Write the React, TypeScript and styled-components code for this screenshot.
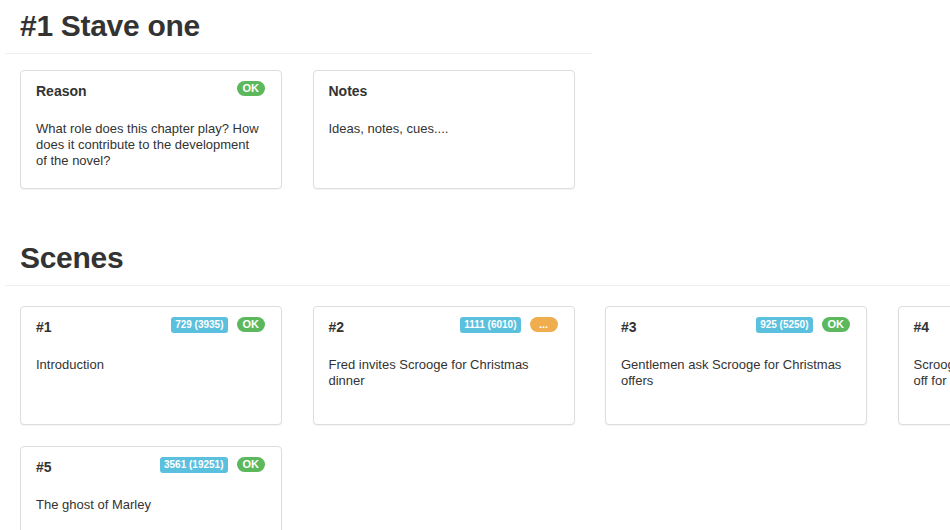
import React, { FC } from "react";
import styled, { createGlobalStyle } from "styled-components";

type Status = "ok" | "pending";

interface IScene {
	id: number;
	text: string;
	words?: string;
	status: Status;
}

const scenes: IScene[] = [
	{ id: 1, text: "Introduction", words: "729 (3935)", status: "ok" },
	{ id: 2, text: "Fred invites Scrooge for Christmas dinner", words: "1111 (6010)", status: "pending" },
	{ id: 3, text: "Gentlemen ask Scrooge for Christmas offers", words: "925 (5250)", status: "ok" },
	{ id: 4, text: "Scrooge sends the charity gentlemen off for good", words: "1010 (5512)", status: "ok" },
	{ id: 5, text: "The ghost of Marley", words: "3561 (19251)", status: "ok" },
];

const StatusBadge: FC<{ status: Status }> = ({ status }) => (
	<Pill $status={status}>{status === "ok" ? "OK" : "..."}</Pill>
);

const App: FC = () => {
	return (
		<>
			<GlobalStyle />
			<Page>
				<ChapterSection>
					<SectionHeader>
						<Heading>#1 Stave one</Heading>
					</SectionHeader>
					<CardGrid $top={16}>
						<Card>
							<CardHeader>
								<CardTitle>Reason</CardTitle>
								<Badges>
									<StatusBadge status="ok" />
								</Badges>
							</CardHeader>
							<CardText>
								What role does this chapter play? How does it contribute to the development of the novel?
							</CardText>
						</Card>
						<Card>
							<CardHeader>
								<CardTitle>Notes</CardTitle>
							</CardHeader>
							<CardText>Ideas, notes, cues....</CardText>
						</Card>
					</CardGrid>
				</ChapterSection>

				<ScenesSection>
					<SectionHeader>
						<Heading>Scenes</Heading>
					</SectionHeader>
					<CardGrid $top={20}>
						{scenes.map((scene) => (
							<Card key={scene.id}>
								<CardHeader>
									<CardTitle>#{scene.id}</CardTitle>
									<Badges>
										{scene.words && <WordCount>{scene.words}</WordCount>}
										<StatusBadge status={scene.status} />
									</Badges>
								</CardHeader>
								<CardText>{scene.text}</CardText>
							</Card>
						))}
					</CardGrid>
				</ScenesSection>
			</Page>
		</>
	);
};

export default App;

const GlobalStyle = createGlobalStyle`
	html, body {
		margin: 0;
		padding: 0;
		background: #fff;
		overflow: hidden;
	}
	body {
		font-family: "Liberation Sans", Arial, sans-serif;
		color: #333;
		font-size: 13px;
	}
`;

const Page = styled.div`
	width: 1400px;
	padding-left: 5px;
`;

const ChapterSection = styled.section`
	width: 587px;
`;

const ScenesSection = styled.section`
	margin-top: 43px;
	width: 1395px;
`;

const SectionHeader = styled.div`
	border-bottom: 1px solid #eee;
	padding: 0 0 11px 15px;
`;

const Heading = styled.h1`
	margin: 0;
	padding-top: 9px;
	font-size: 30px;
	font-weight: 700;
	line-height: 33px;
	color: #333;
	letter-spacing: -0.3px;
`;

const CardGrid = styled.div<{ $top: number }>`
	display: flex;
	flex-wrap: wrap;
	width: 1170px;
	gap: 21px 30.5px;
	margin-top: ${(p) => p.$top}px;
	padding-left: 15px;
`;

const Card = styled.div`
	box-sizing: border-box;
	width: 262px;
	height: 119px;
	padding: 12px 18px 0 15px;
	background: #fff;
	border: 1px solid #ddd;
	border-radius: 4px;
	box-shadow: 0 1px 1px rgba(0, 0, 0, 0.05);
`;

const CardHeader = styled.div`
	display: flex;
	justify-content: space-between;
	align-items: flex-start;
	height: 16px;
`;

const CardTitle = styled.div`
	font-size: 14px;
	font-weight: 700;
	line-height: 16px;
`;

const Badges = styled.div`
	display: flex;
	gap: 9px;
	margin-top: -2px;
	margin-right: -2px;
`;

const WordCount = styled.span`
	display: inline-block;
	background: #5bc0de;
	color: #fff;
	font-size: 10px;
	font-weight: 700;
	line-height: 16px;
	height: 16px;
	padding: 0 4px;
	border-radius: 3px;
	white-space: nowrap;
`;

const Pill = styled.span<{ $status: Status }>`
	display: inline-block;
	min-width: 28px;
	box-sizing: border-box;
	text-align: center;
	background: ${(p) => (p.$status === "ok" ? "#5cb85c" : "#f0ad4e")};
	color: #fff;
	font-size: 11px;
	font-weight: 700;
	line-height: 15px;
	height: 15px;
	padding: 0 6px;
	border-radius: 8px;
`;

const CardText = styled.p`
	margin: 22px 0 0;
	font-size: 13px;
	line-height: 16px;
`;
